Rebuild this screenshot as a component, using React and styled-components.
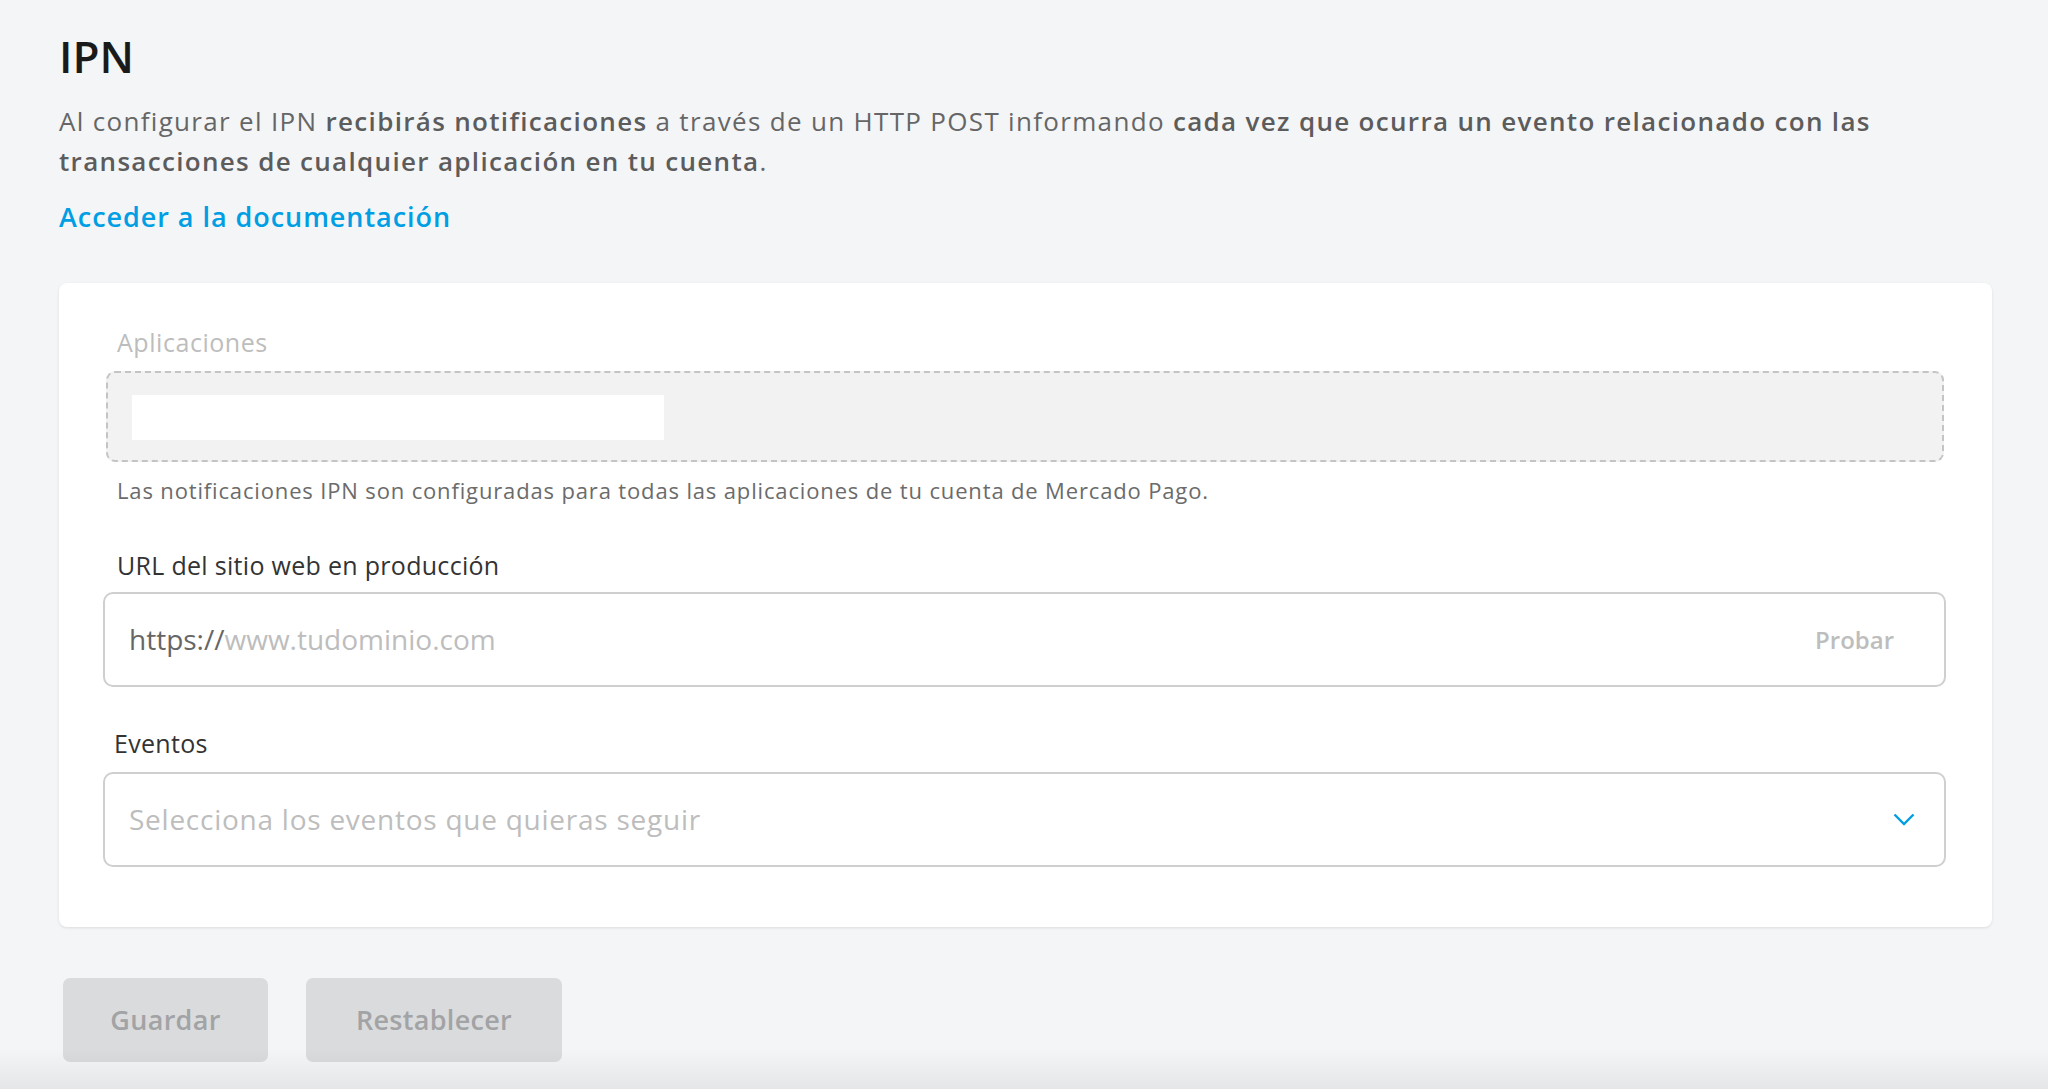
import React from 'react'
import styled, { createGlobalStyle } from 'styled-components'

const GlobalStyle = createGlobalStyle`
  html, body {
    margin: 0;
    padding: 0;
    background: #f4f5f7;
    font-family: 'Open Sans', Lato, 'Liberation Sans', sans-serif;
    -webkit-font-smoothing: antialiased;
  }
  * {
    box-sizing: border-box;
  }
`

const Page = styled.main`
  min-height: 1089px;
  padding: 30px 40px 0 59px;
`

const Title = styled.h1`
  margin: 0;
  font-size: 44px;
  line-height: 1.2;
  font-weight: 600;
  color: #1a1a1a;
`

const Intro = styled.p`
  margin: 18px 0 0;
  font-size: 26px;
  line-height: 40px;
  letter-spacing: 1.32px;
  color: #666;
  b {
    font-weight: 600;
    color: #5c5c5c;
  }
`

const DocLink = styled.a`
  display: inline-block;
  margin-top: 18px;
  font-size: 27px;
  line-height: 36px;
  font-weight: 600;
  letter-spacing: 0.95px;
  color: #009ee3;
  text-decoration: none;
`

const Card = styled.section`
  margin: 48px 16px 0 0;
  background: #fff;
  border-radius: 8px;
  box-shadow: 0 1px 3px rgba(0, 0, 0, 0.1);
  padding: 44px 46px 60px 44px;
  display: flex;
  flex-direction: column;
`

const Field = styled.div`
  display: flex;
  flex-direction: column;
  margin-top: ${p => p.$top || 0}px;
`

const Label = styled.label`
  padding-left: ${p => p.$indent ?? 14}px;
  font-size: 25px;
  line-height: 30px;
  letter-spacing: ${p => (p.$disabled ? 0.55 : 0.3)}px;
  color: ${p => (p.$disabled ? '#bdbdbd' : '#333')};
  margin-bottom: ${p => p.$gap ?? 12}px;
`

const ReadOnlyBox = styled.div`
  margin: 0 2px 0 3px;
  height: 91px;
  padding: 22px 24px;
  background: #f2f2f2;
  border: 2px dashed #c4c4c4;
  border-radius: 9px;
  display: flex;
  align-items: flex-start;
`

const MaskedValue = styled.div`
  width: 532px;
  height: 45px;
  background: #fff;
`

const Helper = styled.p`
  margin: 14px 0 0;
  padding-left: 14px;
  font-size: 22px;
  line-height: 28px;
  letter-spacing: 0.85px;
  color: #6b6b6b;
`

const InputBox = styled.div`
  height: 95px;
  border: 2px solid #cfcfcf;
  border-radius: 10px;
  padding: 0 50px 0 24px;
  display: flex;
  align-items: center;
  justify-content: space-between;
  font-size: 28px;
`

const Prefix = styled.span`
  color: #666;
`

const Placeholder = styled.span`
  color: #bdbdbd;
  letter-spacing: ${p => p.$spacing || 0}px;
`

const TestButton = styled.span`
  font-size: 24px;
  font-weight: 600;
  color: #bdbdbd;
`

const Chevron = styled.svg`
  width: 22px;
  height: 13px;
  margin-right: -21px;
`

const Actions = styled.div`
  display: flex;
  gap: 38px;
  margin: 51px 0 0 4px;
`

const Button = styled.button`
  width: ${p => p.$width}px;
  height: 84px;
  border: none;
  border-radius: 7px;
  background: #dadbdd;
  color: #a2a3a5;
  font-family: inherit;
  font-size: 27px;
  font-weight: 600;
  letter-spacing: 0.3px;
`

const BottomFade = styled.div`
  position: fixed;
  left: 0;
  right: 0;
  bottom: 0;
  height: 40px;
  pointer-events: none;
  background: linear-gradient(to bottom, rgba(0, 0, 0, 0), rgba(0, 0, 0, 0.06));
`

export default function App() {
  return (
    <>
      <GlobalStyle />
      <Page>
        <Title>IPN</Title>
        <Intro>
          Al configurar el IPN <b>recibirás notificaciones</b> a través de un HTTP POST informando{' '}
          <b>cada vez que ocurra un evento relacionado con las</b>
          <br />
          <b>transacciones de cualquier aplicación en tu cuenta</b>.
        </Intro>
        <DocLink href='#'>Acceder a la documentación</DocLink>

        <Card>
          <Field>
            <Label $disabled $gap={14}>Aplicaciones</Label>
            <ReadOnlyBox>
              <MaskedValue />
            </ReadOnlyBox>
            <Helper>
              Las notificaciones IPN son configuradas para todas las aplicaciones de tu cuenta de Mercado Pago.
            </Helper>
          </Field>

          <Field $top={46}>
            <Label>URL del sitio web en producción</Label>
            <InputBox>
              <span>
                <Prefix>https://</Prefix>
                <Placeholder>www.tudominio.com</Placeholder>
              </span>
              <TestButton>Probar</TestButton>
            </InputBox>
          </Field>

          <Field $top={41}>
            <Label $indent={11} $gap={14}>Eventos</Label>
            <InputBox>
              <Placeholder $spacing={0.75}>Selecciona los eventos que quieras seguir</Placeholder>
              <Chevron viewBox='0 0 22 13'>
                <polyline points='1.5,1.5 11,11 20.5,1.5' fill='none' stroke='#009ee3' strokeWidth='2.4' />
              </Chevron>
            </InputBox>
          </Field>
        </Card>

        <Actions>
          <Button $width={205}>Guardar</Button>
          <Button $width={256}>Restablecer</Button>
        </Actions>
      </Page>
      <BottomFade />
    </>
  )
}
